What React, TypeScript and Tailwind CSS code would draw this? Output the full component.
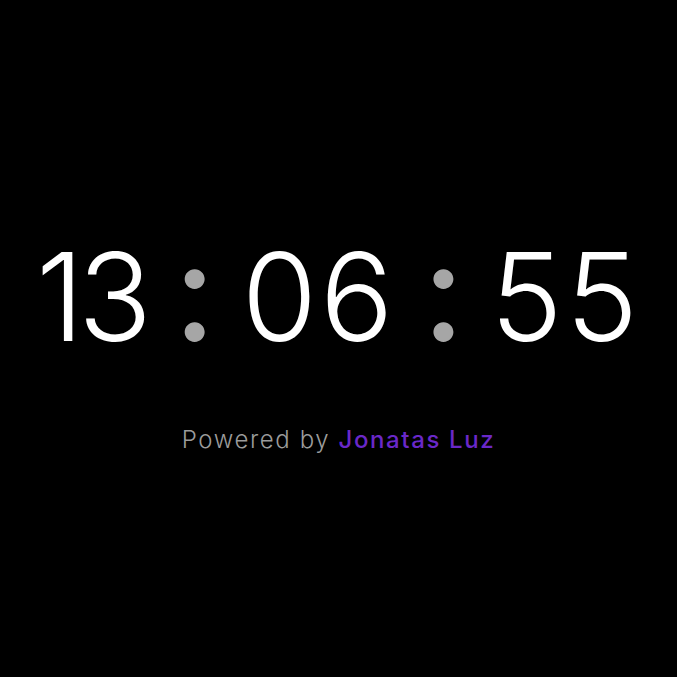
const digits = "font-['Inter','Noto_Sans',sans-serif] font-light text-white text-[122px]"
const colon = "font-['Inter','Noto_Sans',sans-serif] font-medium text-[#a6a6a6] text-[138px]"

const App = () => {
  return (
    <div className="flex h-[677px] w-full flex-col items-center justify-center bg-black">
      <div className="mt-[2px] flex items-baseline gap-[26px] leading-none">
        <span className={digits}>
          <span className="tracking-[-6px]">1</span>3
        </span>
        <span className={`${colon} -ml-[4px]`}>:</span>
        <span className={`${digits} tracking-[3px]`}>06</span>
        <span className={colon}>:</span>
        <span className={`${digits} tracking-[3px]`}>55</span>
      </div>
      <p className="mt-[62px] font-['Inter','Noto_Sans',sans-serif] text-[24px] font-light tracking-[1.6px] text-[#9c9c9c]">
        Powered by <span className="font-medium text-[#6a28c8]">Jonatas Luz</span>
      </p>
    </div>
  )
}

export default App
